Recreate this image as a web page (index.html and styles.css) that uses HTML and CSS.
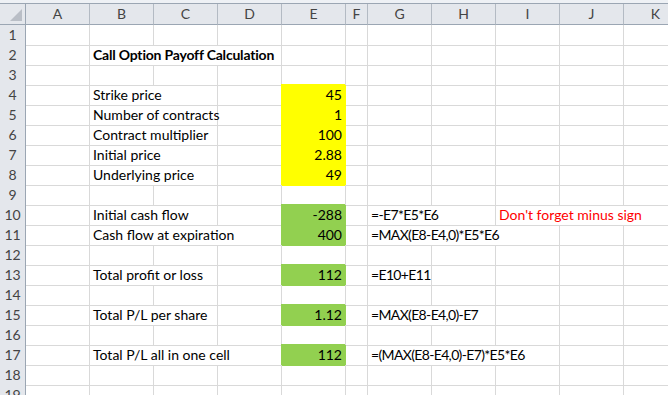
FILE: index.html
```html
<!DOCTYPE html>
<html>
<head>
  <title>Call Option Payoff</title>
  <link rel="stylesheet" href="styles.css">
</head>
<body>
  <div class="top-band"></div>

  <div class="sheet" id="sheet">
    <div class="row head">
      <div class="corner"><span class="tri"></span></div>
      <div class="col-head">A</div>
      <div class="col-head">B</div>
      <div class="col-head">C</div>
      <div class="col-head">D</div>
      <div class="col-head">E</div>
      <div class="col-head">F</div>
      <div class="col-head">G</div>
      <div class="col-head">H</div>
      <div class="col-head">I</div>
      <div class="col-head">J</div>
      <div class="col-head">K</div>
    </div>
  </div>

  <script>
    var cols = ["A", "B", "C", "D", "E", "F", "G", "H", "I", "J", "K"];

    // c = column, t = text, s = columns the text runs over, k = extra classes
    var data = {
      2: [{c: "B", t: "Call Option Payoff Calculation", s: 3, k: "bold"}],
      4: [{c: "B", t: "Strike price", s: 2}, {c: "E", t: "45", k: "num yellow"}],
      5: [{c: "B", t: "Number of contracts", s: 2}, {c: "E", t: "1", k: "num yellow"}],
      6: [{c: "B", t: "Contract multiplier", s: 2}, {c: "E", t: "100", k: "num yellow"}],
      7: [{c: "B", t: "Initial price", s: 2}, {c: "E", t: "2.88", k: "num yellow"}],
      8: [{c: "B", t: "Underlying price", s: 2}, {c: "E", t: "49", k: "num yellow"}],
      10: [{c: "B", t: "Initial cash flow", s: 2}, {c: "E", t: "-288", k: "num green"},
           {c: "G", t: "=-E7*E5*E6", s: 2, k: "formula"}, {c: "I", t: "Don't forget minus sign", s: 3, k: "red"}],
      11: [{c: "B", t: "Cash flow at expiration", s: 3}, {c: "E", t: "400", k: "num green"},
           {c: "G", t: "=MAX(E8-E4,0)*E5*E6", s: 3, k: "formula"}],
      13: [{c: "B", t: "Total profit or loss", s: 2}, {c: "E", t: "112", k: "num green"},
           {c: "G", t: "=E10+E11", k: "formula"}],
      15: [{c: "B", t: "Total P/L per share", s: 2}, {c: "E", t: "1.12", k: "num green"},
           {c: "G", t: "=MAX(E8-E4,0)-E7", s: 2, k: "formula"}],
      17: [{c: "B", t: "Total P/L all in one cell", s: 3}, {c: "E", t: "112", k: "num green"},
           {c: "G", t: "=(MAX(E8-E4,0)-E7)*E5*E6", s: 3, k: "formula"}]
    };

    var sheet = document.getElementById("sheet");

    for (var r = 1; r <= 19; r++) {
      var row = document.createElement("div");
      row.className = "row";

      var head = document.createElement("div");
      head.className = "row-head";
      head.textContent = r;
      row.appendChild(head);

      var cells = data[r] || [];
      for (var i = 0; i < cols.length; i++) {
        var cell = document.createElement("div");
        cell.className = "cell";
        var spec = cells.filter(function(c) { return c.c === cols[i]; })[0];
        if (spec) {
          cell.textContent = spec.t;
          if (spec.k) cell.className += " " + spec.k;
          if (spec.s) {
            cell.className += " span" + spec.s;
            i += spec.s - 1;
          }
        }
        row.appendChild(cell);
      }
      sheet.appendChild(row);
    }
  </script>
</body>
</html>
```

FILE: styles.css
```css
* {
  box-sizing: border-box;
}

body {
  margin: 0;
  padding: 0;
  background-color: white;
  font-family: Lato, "Liberation Sans", sans-serif;
  color: black;
  overflow: hidden;
}

.top-band {
  height: 4px;
  background-color: #eef1f5;
  border-bottom: 1px solid #9ba6b3;
}

.row {
  display: grid;
  grid-template-columns: 26px 64px 64px 64px 64px 64px 22px 64px 64px 64px 64px 64px;
  height: 20px;
}

.row.head {
  height: 21px;
}

.corner,
.col-head {
  position: relative;
  background-color: #e4e7ec;
  border-right: 1px solid #b3bac3;
  border-bottom: 1px solid #9ba6b3;
  color: #444;
  font-size: 14px;
  line-height: 20px;
  text-align: center;
}

.corner {
  border-right-color: #9ba6b3;
}

.tri {
  position: absolute;
  right: 3px;
  bottom: 3px;
  width: 0;
  height: 0;
  border-left: 12px solid transparent;
  border-bottom: 12px solid #b9bec6;
}

.row-head {
  background-color: #e4e7ec;
  border-right: 1px solid #9ba6b3;
  border-bottom: 1px solid #c9ced5;
  color: #444;
  font-size: 14px;
  line-height: 20px;
  text-align: center;
}

.cell {
  border-right: 1px solid #d9d9d9;
  border-bottom: 1px solid #d9d9d9;
  padding: 0 3px;
  font-size: 14px;
  line-height: 20px;
  white-space: nowrap;
}

.span2 {
  grid-column: span 2;
}

.span3 {
  grid-column: span 3;
}

.bold {
  font-weight: bold;
  letter-spacing: -0.2px;
}

.formula {
  letter-spacing: -0.65px;
}

.num {
  text-align: right;
}

.red {
  color: #ff0000;
}

.yellow {
  background-color: #ffff00;
  border-color: #ffff00;
  box-shadow: -1px -1px 0 0 #ffff00;
}

.green {
  background-color: #92d050;
  border-color: #92d050;
  box-shadow: -1px -1px 0 0 #92d050;
}
```
